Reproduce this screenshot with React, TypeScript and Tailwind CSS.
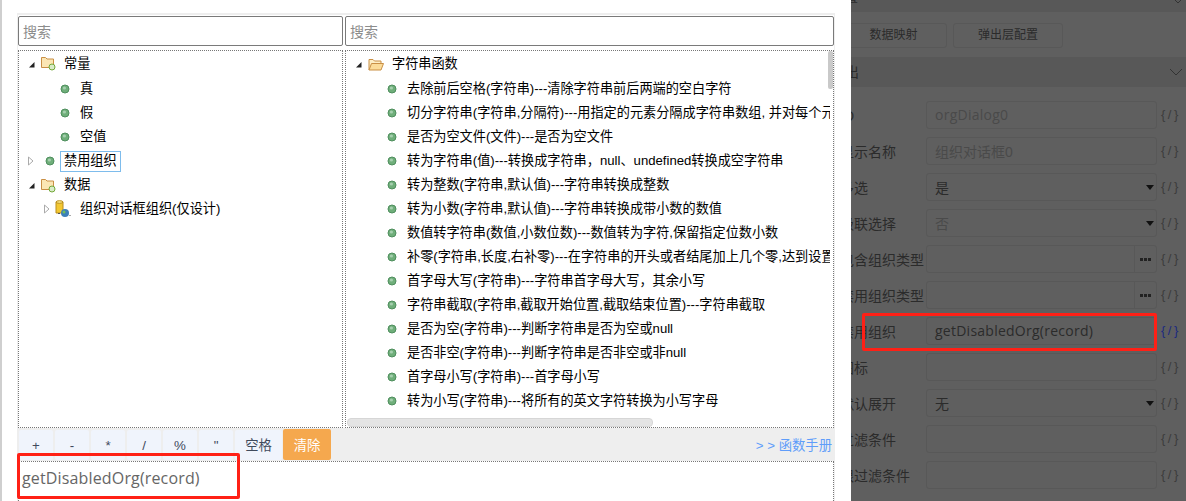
import React from "react";

const font = { fontFamily: '"Liberation Sans", "Noto Sans CJK SC", sans-serif' };
const latin = { fontFamily: '"Open Sans", "Noto Sans CJK SC", sans-serif' };

function Bullet() {
  return (
    <svg width="10" height="10" viewBox="0 0 10 10" className="shrink-0">
      <circle cx="5" cy="5" r="4" fill="#6fae7a" stroke="#4f8f5e" />
      <circle cx="4.4" cy="4" r="1.6" fill="#a5cfae" />
    </svg>
  );
}
function Expanded() {
  return (
    <svg width="7" height="7" viewBox="0 0 7 7" className="shrink-0">
      <path d="M6.5 1V6.5H1Z" fill="#222" />
    </svg>
  );
}
function Collapsed() {
  return (
    <svg width="6" height="10" viewBox="0 0 6 10" className="shrink-0">
      <path d="M.5 1 5 5 .5 9Z" fill="#fff" stroke="#aaa" />
    </svg>
  );
}
function Folder() {
  return (
    <svg width="15" height="15" viewBox="0 0 15 15" className="shrink-0">
      <path d="M.5 1.500h4l1.500 1.500h6.500v8.500H.5Z" fill="#fbe6b4" stroke="#c98f45" />
      <circle cx="11" cy="11" r="3" fill="#d8ebc9" stroke="#74a83a" />
    </svg>
  );
}
function OpenFolder() {
  return (
    <svg width="16" height="13" viewBox="0 0 16 13" className="shrink-0">
      <path d="M1 12V1.500h4L6.500 3H13v2.500" fill="#fdeec6" stroke="#c98f45" />
      <path d="M1 12 3.500 5.500H15.500L13 12Z" fill="#fbdc9a" stroke="#c98f45" />
    </svg>
  );
}
function Db() {
  return (
    <svg width="16" height="18" viewBox="0 0 16 18" className="shrink-0">
      <path d="M1 2h7v11H1Z" fill="#f3c832" stroke="#b98d1c" />
      <ellipse cx="4.500" cy="2" rx="3.500" ry="1.300" fill="#fbe98a" stroke="#b98d1c" />
      <circle cx="10" cy="13" r="4" fill="#3c7fb8" />
      <circle cx="9" cy="12" r="1.500" fill="#6fbf5c" />
      <path d="M3 13.500h2M14.500 15.500h1" stroke="#555" />
    </svg>
  );
}

const leaves = [
  "去除前后空格(字符串)---清除字符串前后两端的空白字符",
  "切分字符串(字符串,分隔符)---用指定的元素分隔成字符串数组, 并对每个元素进行处理",
  "是否为空文件(文件)---是否为空文件",
  "转为字符串(值)---转换成字符串，null、undefined转换成空字符串",
  "转为整数(字符串,默认值)---字符串转换成整数",
  "转为小数(字符串,默认值)---字符串转换成带小数的数值",
  "数值转字符串(数值,小数位数)---数值转为字符,保留指定位数小数",
  "补零(字符串,长度,右补零)---在字符串的开头或者结尾加上几个零,达到设置长度",
  "首字母大写(字符串)---字符串首字母大写，其余小写",
  "字符串截取(字符串,截取开始位置,截取结束位置)---字符串截取",
  "是否为空(字符串)---判断字符串是否为空或null",
  "是否非空(字符串)---判断字符串是否非空或非null",
  "首字母小写(字符串)---首字母小写",
  "转为小写(字符串)---将所有的英文字符转换为小写字母",
];

function Row({ indent, children }: { indent: string; children: React.ReactNode }) {
  return <div className={`flex h-6 items-center whitespace-nowrap ${indent}`}>{children}</div>;
}

function SearchBox({ className }: { className: string }) {
  return (
    <div className={`flex h-[30px] items-center rounded-[2px] border border-[#7a7a7a] bg-white pl-1 pt-[2px] text-sm text-[#8c8c8c] ${className}`}>
      搜索
    </div>
  );
}

function Brace({ active }: { active?: boolean }) {
  return <span className={`ml-[4px] text-[13px] tracking-[2.500px] ${active ? "text-[#1c2a80]" : "text-[#3c3c3c]"}`}>{"{/}"}</span>;
}

function Prop({ label, value, dim, select, more, mono }: { label: string; value?: string; dim?: boolean; select?: boolean; more?: boolean; mono?: boolean }) {
  return (
    <div className="flex h-9 items-center text-sm text-[#2b2b2b]">
      <span className="w-[86px] shrink-0 whitespace-nowrap pt-[2px]">{label}</span>
      <div className="flex h-[28px] w-[231px] shrink-0 items-center rounded-[3px] border border-[#585858] pl-[8px]">
        <span style={mono ? latin : undefined} className={`flex-1 whitespace-nowrap ${mono ? "tracking-[0.25px]" : "pt-[2px]"} ${dim ? "text-[#4a4a4a]" : ""}`}>{value}</span>
        {select && <span className="mr-[2px] h-0 w-0 border-x-[4.500px] border-t-[5px] border-x-transparent border-t-[#111]" />}
        {more && (
          <span className="flex h-full w-[22px] items-center justify-center gap-px border-l border-[#585858]">
            <span className="size-[3px] bg-[#222]" />
            <span className="size-[3px] bg-[#222]" />
            <span className="size-[3px] bg-[#222]" />
          </span>
        )}
      </div>
      <Brace active={label === "禁用组织"} />
    </div>
  );
}

export default function App() {
  return (
    <div style={font} className="relative h-[501px] w-[1186px] overflow-hidden bg-[#5f5f5f]">
      {/* Background property panel */}
      <div className="ml-[840px] flex h-full flex-col">
        <div className="flex h-3 items-start justify-between overflow-hidden bg-[#585858] pr-[5px] text-sm leading-none text-[#2b2b2b]">
          <span className="-ml-[10px] -mt-[11px]">配置</span>
          <svg width="6" height="3" viewBox="0 0 6 3"><path d="M0 0l3 3 3-3" fill="none" stroke="#333" /></svg>
        </div>
        <div className="flex h-[45px] items-center gap-[6px] pt-[1px] text-[12px] text-[#2b2b2b]">
          <div className="flex h-[25px] w-[107px] items-center justify-center rounded-[3px] border border-[#585858]">数据映射</div>
          <div className="flex h-[25px] w-[110px] items-center justify-center rounded-[3px] border border-[#585858]">弹出层配置</div>
        </div>
        <div className="flex h-[30px] items-center justify-between bg-[#585858] pr-[3px] text-sm text-[#2b2b2b]">
          <span className="-ml-[9px]">输出</span>
          <svg width="14" height="8" viewBox="0 0 14 8"><path d="M1 1l6 6 6-6" fill="none" stroke="#333" /></svg>
        </div>
        <div className="pt-[10px]">
          <Prop label="ID" value="orgDialog0" dim mono />
          <Prop label="显示名称" value="组织对话框0" dim />
          <Prop label="多选" value="是" select />
          <Prop label="级联选择" value="否" dim select />
          <Prop label="包含组织类型" more />
          <Prop label="禁用组织类型" more />
          <Prop label="禁用组织" value="getDisabledOrg(record)" mono />
          <Prop label="图标" />
          <Prop label="默认展开" value="无" select />
          <Prop label="过滤条件" />
          <Prop label="限过滤条件" />
        </div>
      </div>

      {/* Red annotation on the panel */}
      <div className="absolute left-[862px] top-[313px] h-[38px] w-[295px] rounded-[2px] border-[3px] border-[#ff2016]" />

      {/* Modal dialog */}
      <div className="absolute inset-y-0 left-0 flex w-[851px] flex-col border-l-2 border-[#cfcfcf] bg-white pl-[15px] pr-[16px] pt-[13px]">
        <div className="flex flex-1 flex-col border-x border-t-2 border-[#eeeeee] pt-px">
          <div className="flex gap-[2px]">
            <SearchBox className="w-[325px]" />
            <SearchBox className="flex-1" />
          </div>
          <div className="mt-[4px] flex h-[378px] gap-[2px] text-[13.17px] text-black">
            <div className="w-[325px] overflow-hidden border border-dotted border-[#777] pt-px">
              <Row indent="pl-[9px] gap-[6px]"><Expanded /><span className="-mt-px flex items-center gap-[8px]"><Folder />常量</span></Row>
              <div className="mt-px">
                {["真", "假", "空值"].map((t) => (
                  <Row key={t} indent="pl-[41px] gap-[10px]"><Bullet /><span>{t}</span></Row>
                ))}
              </div>
              <Row indent="pl-[9px]">
                <Collapsed />
                <span className="ml-[11px]"><Bullet /></span>
                <span className="ml-[5px] flex h-[21px] items-center border border-[#7ebcec] px-[3px]">禁用组织</span>
              </Row>
              <Row indent="pl-[9px] gap-[6px]"><Expanded /><span className="flex items-center gap-[8px]"><Folder />数据</span></Row>
              <Row indent="pl-[25px]"><Collapsed /><span className="ml-[5px]"><Db /></span><span className="ml-[9px]">组织对话框组织(仅设计)</span></Row>
            </div>
            <div className="relative flex-1 overflow-hidden border border-dotted border-[#777] pt-px">
              <div className="mr-[3px] overflow-hidden">
                <Row indent="pl-[9px] gap-[6px]"><Expanded /><span className="flex items-center gap-[8px]"><OpenFolder />字符串函数</span></Row>
                <div className="mt-px">
                  {leaves.map((t) => (
                    <Row key={t} indent="pl-[41px] gap-[10px]"><Bullet /><span>{t}</span></Row>
                  ))}
                </div>
              </div>
              <div className="absolute right-0 top-0 h-[38px] w-[5px] rounded-[2px] bg-[#c9c9c9]" />
              <div className="absolute bottom-0 left-[1px] h-[9px] w-[306px] rounded-[4px] border border-[#d6d6d6] bg-[#e4e4e4]" />
            </div>
          </div>
          <div className="flex h-[33px] items-center gap-[2px] bg-[#eeeeee] pl-[1px] pr-[2px] text-[13.33px] text-[#3f4a5c]">
            {["+", "-", "*", "/", "%", '"'].map((t) => (
              <div key={t} className="flex h-[30px] w-[34px] items-center justify-center rounded-[2px] bg-[#f0f4fc] pt-[3px]">{t}</div>
            ))}
            <div className="flex h-[30px] w-[47px] items-center justify-center rounded-[2px] bg-[#f0f4fc] pt-[2px]">空格</div>
            <div className="-ml-px flex h-[31px] w-[48px] items-center justify-center rounded-[2px] bg-[#f5a84e] pt-[2px] text-white">清除</div>
            <span className="ml-auto pt-[2px] text-[#5f9dfa]">&gt; &gt; 函数手册</span>
          </div>
          <div style={latin} className="flex-1 border-x border-t border-dotted border-[#777] pl-[3px] pt-[4px] text-base tracking-[0.15px] text-[#666666]">
            getDisabledOrg(record)
          </div>
        </div>
      </div>

      {/* Red annotation on the dialog */}
      <div className="absolute left-[17px] top-[453px] h-[46px] w-[223px] rounded-[2px] border-[3px] border-[#ff2016]" />
    </div>
  );
}
